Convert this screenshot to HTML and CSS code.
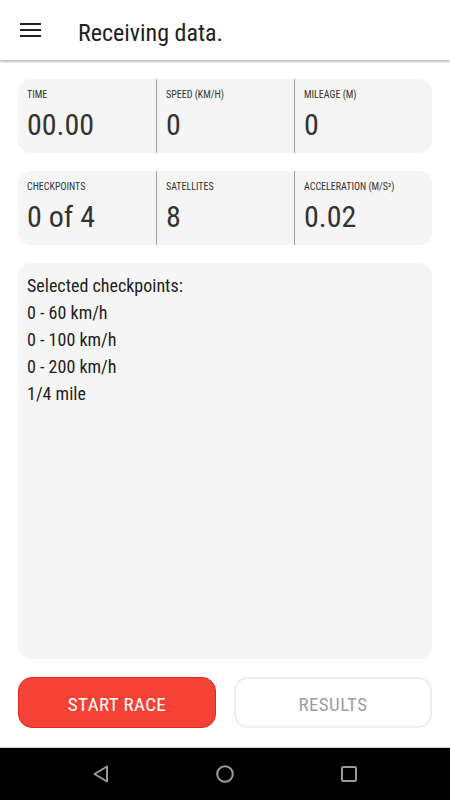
FILE: index.html
```html
<!DOCTYPE html>
<html lang="en">
<head>
<meta charset="utf-8">
<title>Race</title>
<link rel="stylesheet" href="styles.css">
</head>
<body>
<div class="screen">
  <header class="appbar">
    <svg class="menu" width="21" height="14" viewBox="0 0 21 14"><path d="M0 1H21M0 7H21M0 13H21" stroke="#212121" stroke-width="2"/></svg>
    <h1 class="title">Receiving data.</h1>
  </header>
  <main class="content">
    <section class="stats">
      <div class="cell"><div class="label">TIME</div><div class="value">00.00</div></div>
      <div class="cell"><div class="label">SPEED (KM/H)</div><div class="value">0</div></div>
      <div class="cell"><div class="label">MILEAGE (M)</div><div class="value">0</div></div>
    </section>
    <section class="stats">
      <div class="cell"><div class="label">CHECKPOINTS</div><div class="value">0 of 4</div></div>
      <div class="cell"><div class="label">SATELLITES</div><div class="value">8</div></div>
      <div class="cell"><div class="label">ACCELERATION (M/S²)</div><div class="value">0.02</div></div>
    </section>
    <section class="checkpoints">
      <p>Selected checkpoints:</p>
      <p>0 - 60 km/h</p>
      <p>0 - 100 km/h</p>
      <p>0 - 200 km/h</p>
      <p>1/4 mile</p>
    </section>
    <div class="actions">
      <button class="btn btn-primary">START RACE</button>
      <button class="btn btn-outline">RESULTS</button>
    </div>
  </main>
  <nav class="navbar">
    <span class="slot"><svg width="16" height="18" viewBox="0 0 16 18"><path d="M14 1.5V16.5L1.5 9Z" fill="none" stroke="#9a9a9a" stroke-width="2" stroke-linejoin="round"/></svg></span>
    <span class="slot"><svg width="18" height="18" viewBox="0 0 18 18"><circle cx="9" cy="9" r="7.8" fill="none" stroke="#9a9a9a" stroke-width="2"/></svg></span>
    <span class="slot"><svg width="16" height="16" viewBox="0 0 16 16"><rect x="1" y="1" width="14" height="14" rx="1.2" fill="none" stroke="#9a9a9a" stroke-width="2"/></svg></span>
  </nav>
</div>
</body>
</html>
```
FILE: styles.css
```css
* { box-sizing: border-box; }
html, body { margin: 0; padding: 0; }
body {
  font-family: Roboto, "Liberation Sans", sans-serif;
  font-stretch: 85%;
  font-weight: 370;
  background: #fff;
  color: #212121;
}
.screen {
  width: 450px;
  height: 800px;
  display: flex;
  flex-direction: column;
}
.appbar {
  height: 60px;
  flex: none;
  display: flex;
  align-items: center;
  padding-left: 20px;
  background: #fff;
  box-shadow: 0 1px 3px rgba(0,0,0,0.25), 0 2px 2px rgba(0,0,0,0.12);
  position: relative;
  z-index: 1;
}
.menu { display: block; }
.title {
  margin: 5px 0 0 37px;
  font-size: 24px;
  line-height: 28px;
  font-weight: 370;
  color: #212121;
}
.content {
  flex: 1;
  display: flex;
  flex-direction: column;
  gap: 18px;
  padding: 19px 18px 19px;
  min-height: 0;
}
.stats {
  height: 74px;
  flex: none;
  display: grid;
  grid-template-columns: 1fr 1fr 1fr;
  background: #f5f5f5;
  border-radius: 13px;
}
.cell {
  padding: 10px 0 0 9px;
  border-left: 1px solid #9e9e9e;
  overflow: hidden;
}
.cell:first-child { border-left: none; }
.label {
  font-size: 10px;
  line-height: 12px;
  font-weight: 400;
  color: #333;
  white-space: nowrap;
}
.value {
  margin-top: 6px;
  font-size: 30px;
  line-height: 36px;
  color: #333;
  white-space: nowrap;
}
.checkpoints {
  flex: 1;
  background: #f5f5f5;
  border-radius: 13px;
  padding: 9px 9px;
}
.checkpoints p {
  margin: 0;
  font-size: 18px;
  line-height: 27px;
  color: #212121;
}
.actions {
  flex: none;
  display: grid;
  grid-template-columns: 1fr 1fr;
  gap: 18px;
}
.btn {
  height: 51px;
  border-radius: 14px;
  font-family: Roboto, "Liberation Sans", sans-serif;
  font-stretch: 85%;
  font-weight: 400;
  font-size: 19px;
  letter-spacing: 0.4px;
  padding: 3px 0 0;
}
.btn-primary {
  background: #f44336;
  border: 1px solid #e8261a;
  color: #fff;
}
.btn-outline {
  background: #fff;
  border: 2px solid #eeeeee;
  color: #9e9e9e;
}
.navbar {
  height: 53px;
  flex: none;
  background: #000;
  border-top: 1px solid #d6d6d6;
  display: flex;
  justify-content: center;
  align-items: center;
}
.slot {
  width: 124px;
  display: flex;
  justify-content: center;
  align-items: center;
}
.slot svg { display: block; }
```
